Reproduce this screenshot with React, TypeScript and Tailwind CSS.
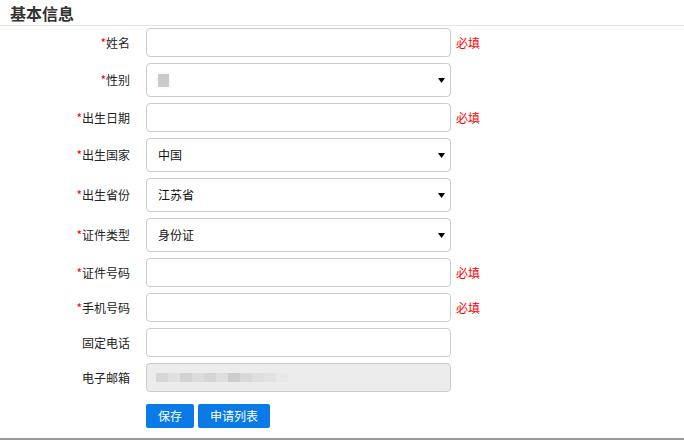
import React from 'react';

type Field = {
  label: string;
  required?: boolean;
  kind: 'text' | 'select' | 'disabled';
  value?: string;
  hint?: boolean;
  blurred?: boolean;
};

const fields: Field[] = [
  { label: '姓名', required: true, kind: 'text', hint: true },
  { label: '性别', required: true, kind: 'select', blurred: true },
  { label: '出生日期', required: true, kind: 'text', hint: true },
  { label: '出生国家', required: true, kind: 'select', value: '中国' },
  { label: '出生省份', required: true, kind: 'select', value: '江苏省' },
  { label: '证件类型', required: true, kind: 'select', value: '身份证' },
  { label: '证件号码', required: true, kind: 'text', hint: true },
  { label: '手机号码', required: true, kind: 'text', hint: true },
  { label: '固定电话', kind: 'text' },
  { label: '电子邮箱', kind: 'disabled' },
];

// pixelated placeholder for the masked e-mail
const mosaic = [
  '#d6d6d6', '#e0e0e0', '#d2d2d2', '#dcdcdc', '#d4d4d4', '#dedede',
  '#cdcdcd', '#d8d8d8', '#dedede', '#e2e2e2', '#e8e8e8',
];

function Row({ f }: { f: Field }) {
  return (
    <div className="flex items-center mb-[6px]">
      <label className="w-[130px] text-right text-[12px] text-[#222] shrink-0">
        {f.required && <span className="text-[#ff0000]">*</span>}
        {f.label}
      </label>
      <div className="ml-4 w-[305px] shrink-0">
        {f.kind === 'text' && (
          <div className="h-[29px] rounded border border-[#cccccc] bg-white" />
        )}
        {f.kind === 'select' && (
          <div className="h-[34px] rounded border border-[#cccccc] bg-white flex items-center pl-[11px] pr-[5px]">
            {f.blurred ? (
              <span className="w-[11px] h-[13px] bg-[#cacaca] shadow-[0_0_4px_#eee]" />
            ) : (
              <span className="text-[12px] text-[#111]">{f.value}</span>
            )}
            <svg className="ml-auto" width="7" height="5" viewBox="0 0 7 5">
              <path d="M0 0h7L3.5 5z" fill="#000" />
            </svg>
          </div>
        )}
        {f.kind === 'disabled' && (
          <div className="h-[29px] rounded border border-[#cccccc] bg-[#ececec] flex items-center pl-[9px]">
            {mosaic.map((c, i) => (
              <span key={i} className="w-[12px] h-[9px]" style={{ backgroundColor: c }} />
            ))}
          </div>
        )}
      </div>
      {f.hint && <span className="ml-[5px] text-[12px] text-[#ff0000]">必填</span>}
    </div>
  );
}

export default function App() {
  return (
    <div
      className="w-[684px] h-[441px] bg-white overflow-hidden flex flex-col"
      style={{ fontFamily: '"Microsoft YaHei", "Noto Sans CJK SC", sans-serif' }}
    >
      <div className="h-[26px] border-b border-[#e5e5e5] pl-[10px] flex items-end">
        <h2 className="text-[16px] font-bold text-[#333] leading-[24px]">基本信息</h2>
      </div>
      <div className="pt-[2px]">
        {fields.map((f) => (
          <Row key={f.label} f={f} />
        ))}
        <div className="flex gap-[4px] pl-[146px] mt-[12px]">
          <button className="w-[48px] h-[24px] rounded-[2px] bg-[#0a7ae6] text-white text-[12px]">保存</button>
          <button className="w-[72px] h-[24px] rounded-[2px] bg-[#0a7ae6] text-white text-[12px]">申请列表</button>
        </div>
      </div>
      <div className="mt-auto mb-[1px] h-[2px] bg-[#9a9a9a]" />
    </div>
  );
}
